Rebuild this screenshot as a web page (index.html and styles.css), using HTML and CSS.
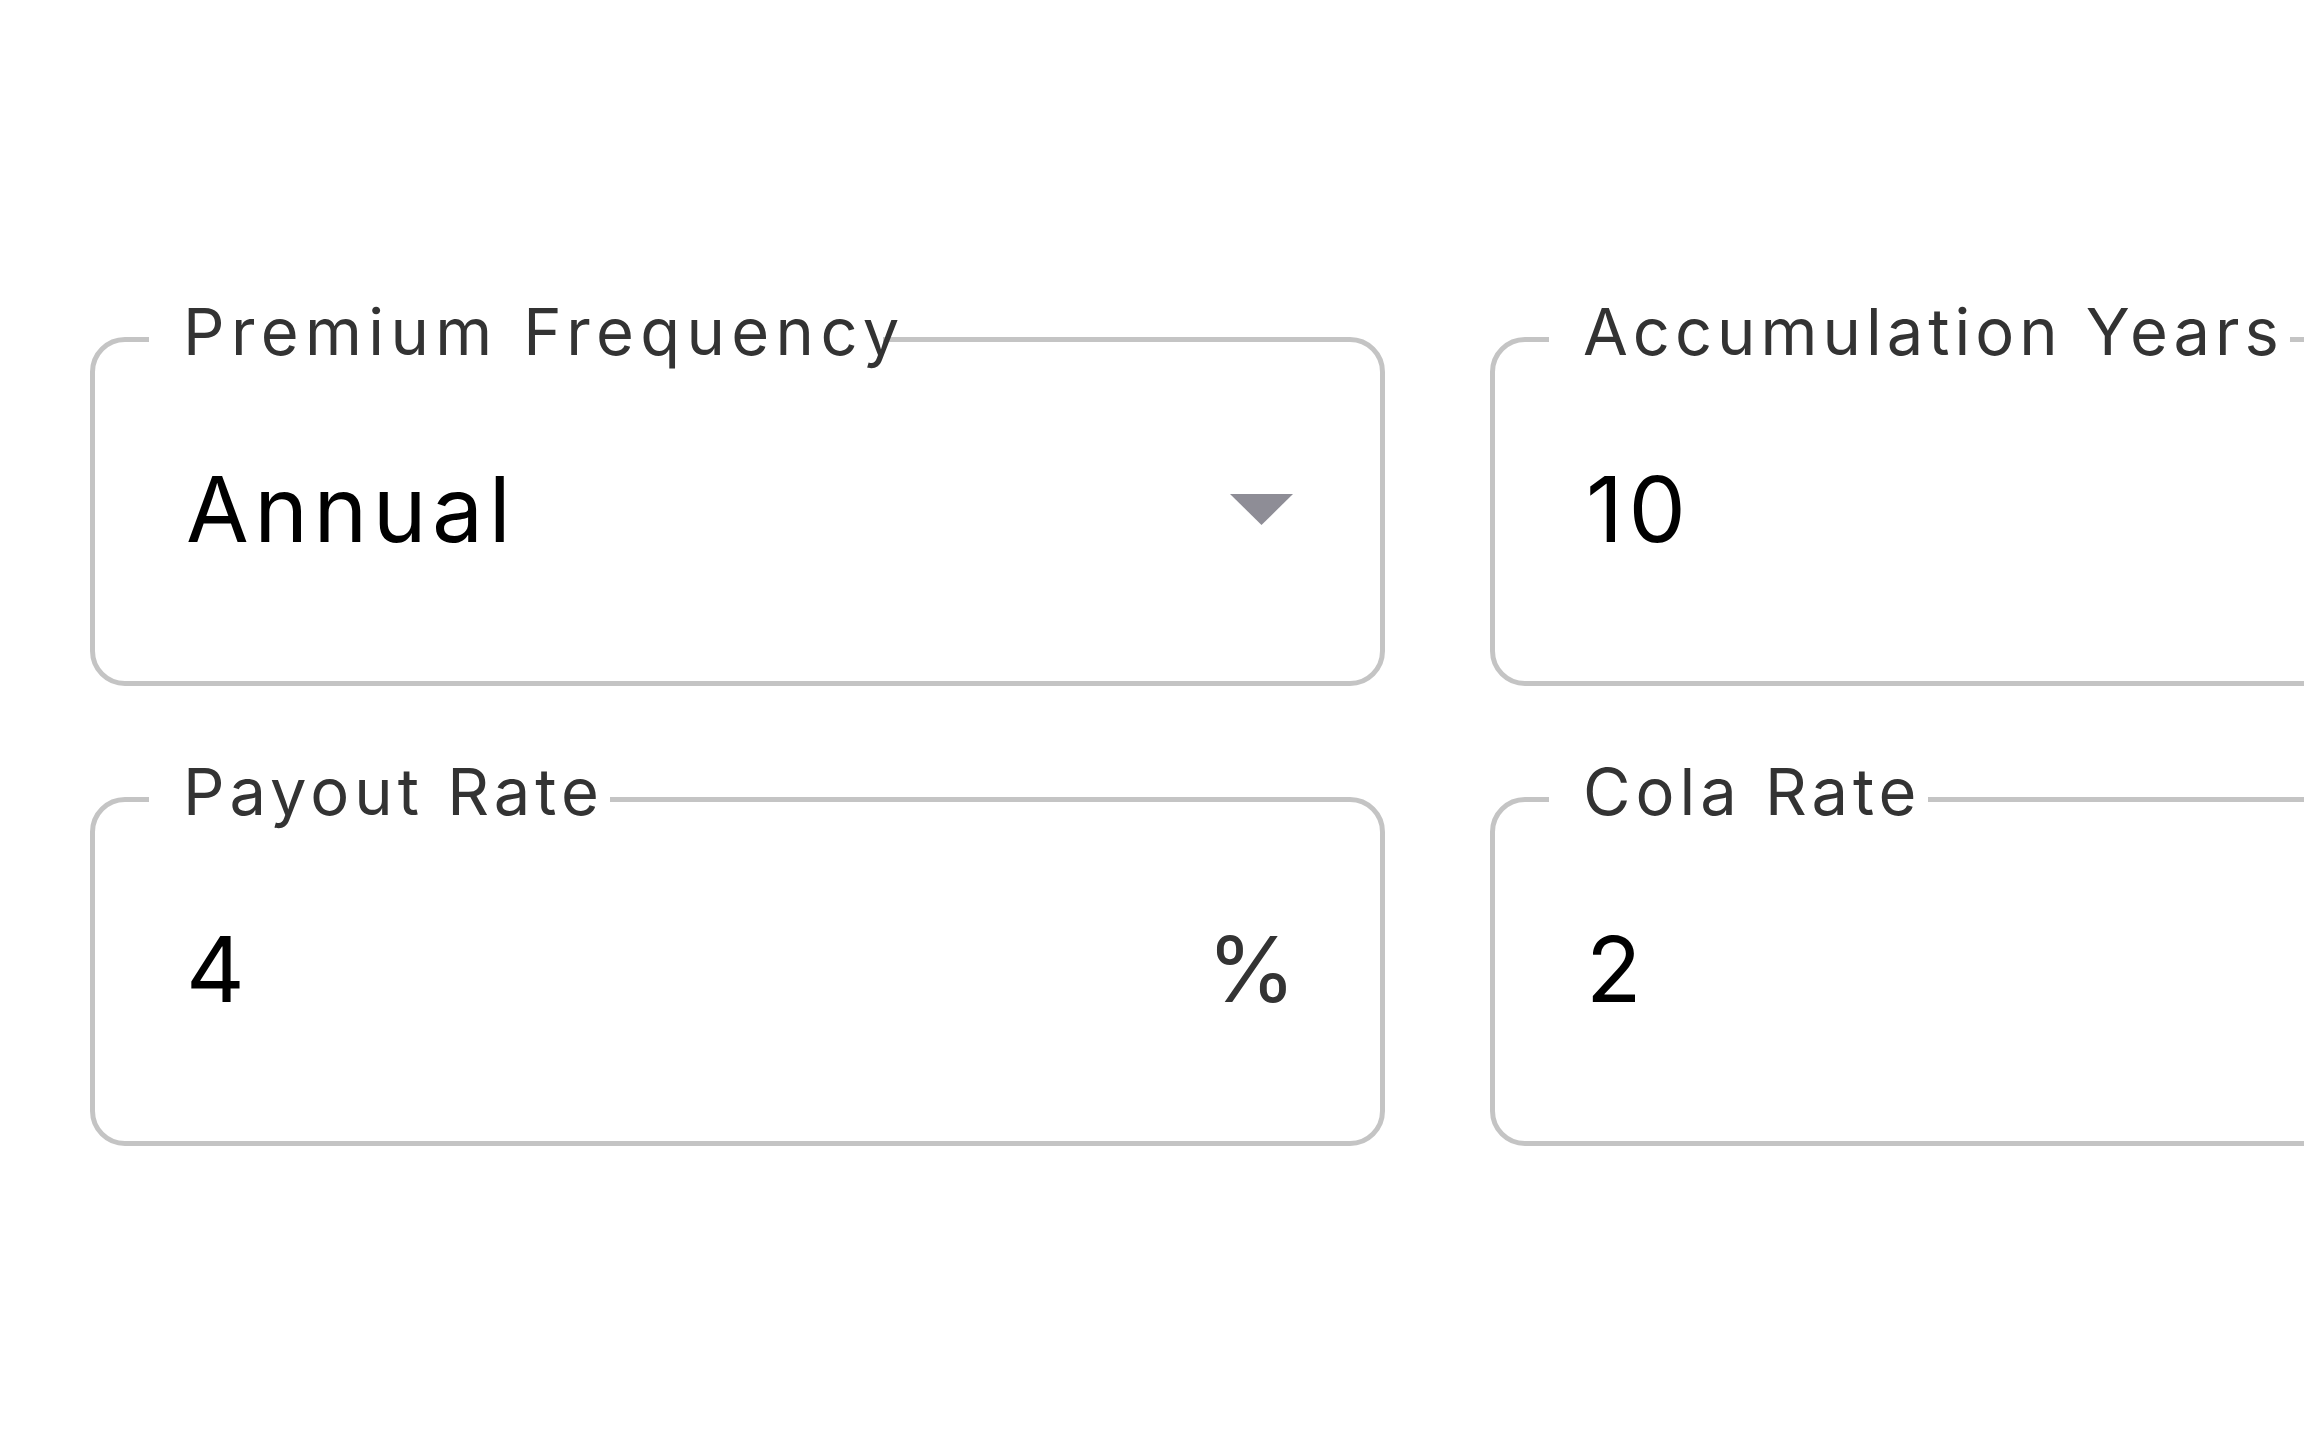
FILE: index.html
```html
<!DOCTYPE html>
<html lang="en">
<head>
    <meta charset="UTF-8">
    <meta name="viewport" content="width=device-width, initial-scale=1.0">
    <title>Annuity Inputs</title>
    <link rel="stylesheet" href="styles.css">
</head>
<body>
    <div class="form-grid">
        <div class="field">
            <span class="field-label label-clip">Premium Frequency</span>
            <div class="field-value">Annual</div>
            <svg class="select-arrow" width="63" height="31" viewBox="0 0 63 31">
                <polygon points="0,0 63,0 31.5,31" fill="#8e8d96"/>
            </svg>
        </div>

        <div class="field">
            <span class="field-label">Accumulation Years</span>
            <div class="field-value">10</div>
        </div>

        <div class="field">
            <span class="field-label">Payout Rate</span>
            <div class="field-value">4</div>
            <span class="field-suffix">%</span>
        </div>

        <div class="field">
            <span class="field-label">Cola Rate</span>
            <div class="field-value">2</div>
        </div>
    </div>
</body>
</html>
```

FILE: styles.css
```css
* {
    margin: 0;
    padding: 0;
    box-sizing: border-box;
    font-family: 'Inter', 'Liberation Sans', sans-serif;
}

html, body {
    background: #fff;
    overflow: hidden;
}

body {
    width: 2304px;
    height: 1440px;
}

.form-grid {
    display: grid;
    grid-template-columns: 1295px 1295px;
    column-gap: 105px;
    row-gap: 111px;
    padding: 337px 0 0 90px;
}

.field {
    position: relative;
    height: 349px;
    border: 5px solid #c4c4c4;
    border-radius: 35px;
    display: flex;
    align-items: center;
    padding: 0 87px 4px 91px;
}

.field-label {
    position: absolute;
    top: -43px;
    left: 54px;
    padding: 0 6px 0 34px;
    background: #fff;
    color: #333;
    font-size: 65px;
    line-height: 1;
    letter-spacing: 5px;
    white-space: nowrap;
}

.label-clip {
    width: 734px;
    letter-spacing: 6.4px;
}

.field-value {
    flex: 1;
    color: #000;
    font-size: 91px;
    line-height: 1;
    letter-spacing: 5.5px;
}

.select-arrow {
    display: block;
    flex-shrink: 0;
}

.field-suffix {
    color: #333;
    font-size: 91px;
    line-height: 1;
    margin-right: -3px;
}
```
